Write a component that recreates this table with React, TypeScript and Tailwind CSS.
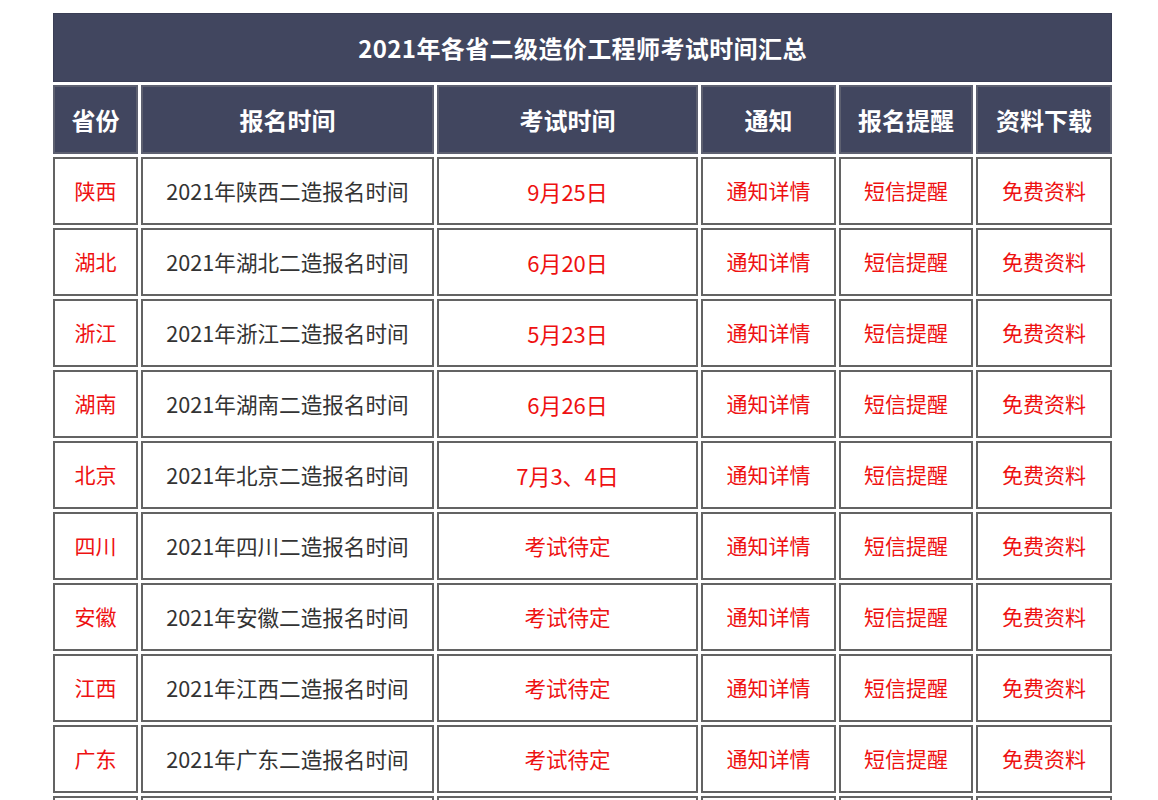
const ROWS = [
  { province: '陕西', exam: '9月25日', examDate: true },
  { province: '湖北', exam: '6月20日', examDate: true },
  { province: '浙江', exam: '5月23日', examDate: true },
  { province: '湖南', exam: '6月26日', examDate: true },
  { province: '北京', exam: '7月3、4日', examDate: true },
  { province: '四川', exam: '考试待定', examDate: false },
  { province: '安徽', exam: '考试待定', examDate: false },
  { province: '江西', exam: '考试待定', examDate: false },
  { province: '广东', exam: '考试待定', examDate: false },
  { province: '山东', exam: '考试待定', examDate: false },
];

const HEADERS = ['省份', '报名时间', '考试时间', '通知', '报名提醒', '资料下载'];

const FONT = "font-['Microsoft_YaHei','Noto_Sans_CJK_SC',sans-serif]";

function Cell({ children, className = 'text-[21px]' }: { children: React.ReactNode; className?: string }) {
  return (
    <div className={`h-[68px] border-2 border-[#636363] bg-white flex items-center justify-center ${className}`}>
      {children}
    </div>
  );
}

export default function App() {
  return (
    <div className={`bg-white min-h-[800px] pt-[13px] pl-[53px] ${FONT}`}>
      <div className="w-[1059px] grid grid-cols-[85px_293px_261px_135px_134px_136px] gap-[3px]">
        <div className="col-span-6 h-[69px] bg-[#41465f] border border-[#3a3e55] flex items-center justify-center text-white font-bold text-[24px] tracking-[0.4px]">
          2021年各省二级造价工程师考试时间汇总
        </div>
        {HEADERS.map((h) => (
          <div
            key={h}
            className="h-[69px] bg-[#41465f] border-2 border-[#5d6070] flex items-center justify-center text-white font-bold text-[24px]"
          >
            {h}
          </div>
        ))}
        {ROWS.map(({ province, exam, examDate }) => (
          <div key={province} className="contents">
            <Cell className="text-[21px] text-[#ee1111]">{province}</Cell>
            <Cell className="text-[21.6px] text-[#333333]">2021年{province}二造报名时间</Cell>
            <Cell className={`text-[#ee1111] ${examDate ? 'text-[22px]' : 'text-[21.5px]'}`}>{exam}</Cell>
            <Cell className="text-[21px] text-[#ee1111]">通知详情</Cell>
            <Cell className="text-[21px] text-[#ee1111]">短信提醒</Cell>
            <Cell className="text-[21px] text-[#ee1111]">免费资料</Cell>
          </div>
        ))}
      </div>
    </div>
  );
}
